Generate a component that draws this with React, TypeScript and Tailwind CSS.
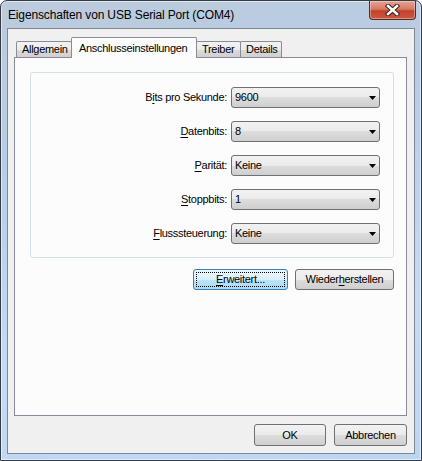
import React from 'react';

const font = "font-['Liberation_Sans',Arial,sans-serif]";

const Key: React.FC<{ children: React.ReactNode }> = ({ children }) => (
  <span className="underline underline-offset-[2px] decoration-[1px]">{children}</span>
);

const Combo: React.FC<{ value: string }> = ({ value }) => (
  <div className="flex h-[21px] items-center rounded-[3px] border border-[#707070] bg-[linear-gradient(#f2f2f2,#ebebeb_50%,#dddddd_50%,#cfcfcf)] pl-[3px] pr-[3px] text-black">
    <span className="leading-none">{value}</span>
    <svg width="7" height="4" viewBox="0 0 7 4" className="ml-auto">
      <polygon points="0,0 7,0 3.5,4" fill="#000" />
    </svg>
  </div>
);

const Button: React.FC<{ children: React.ReactNode; w: string; h: string; focused?: boolean }> = ({
  children,
  w,
  h,
  focused,
}) => (
  <div
    className={
      focused
        ? `relative flex ${w} ${h} items-center justify-center rounded-[3px] border border-[#3c7fb1] bg-[linear-gradient(#eaf6fd,#d9f0fc_50%,#bee6fd_50%,#a7d9f5)] text-black`
        : `relative flex ${w} ${h} items-center justify-center rounded-[3px] border border-[#707070] bg-[linear-gradient(#f2f2f2,#ebebeb_50%,#dddddd_50%,#cfcfcf)] text-black`
    }
  >
    {focused && <div className="absolute inset-[2px] border border-dotted border-black" />}
    <span className="leading-none">{children}</span>
  </div>
);

const Tab: React.FC<{ label: string; w: string; first?: boolean }> = ({ label, w, first }) => (
  <div
    className={`${first ? '' : '-ml-[1px]'} flex h-[16px] ${w} items-center rounded-t-[2px] border border-b-0 border-[#898c95] bg-[linear-gradient(#f2f2f2,#ebebeb_50%,#dddddd_50%,#cfcfcf)] pl-[5px] leading-none text-black`}
  >
    {label}
  </div>
);

const rows: { label: React.ReactNode; value: string }[] = [
  { label: <>B<Key>i</Key>ts pro Sekunde:</>, value: '9600' },
  { label: <><Key>D</Key>atenbits:</>, value: '8' },
  { label: <><Key>P</Key>arität:</>, value: 'Keine' },
  { label: <><Key>S</Key>toppbits:</>, value: '1' },
  { label: <><Key>F</Key>lusssteuerung:</>, value: 'Keine' },
];

export default function App() {
  return (
    <div
      className={`${font} flex h-[461px] w-[422px] flex-col rounded-t-[7px] border border-[#343c47] bg-[linear-gradient(170deg,#bccbdc,#b7cde6_30%,#c4dbf3_70%,#bcd6f2)] px-[6px] pb-[6px] text-[11px] tracking-[-0.3px] shadow-[inset_0_0_0_1px_rgba(255,255,255,0.55)]`}
    >
      {/* title bar */}
      <div className="flex h-[27px] items-start justify-between">
        <div className="pl-[1px] pt-[7px] text-[12px] leading-[15px] tracking-[-0.15px] text-black">
          Eigenschaften von USB Serial Port (COM4)
        </div>
        <div className="mr-[-1px] flex h-[19px] w-[47px] items-center justify-center rounded-b-[4px] border border-t-0 border-[#5b2a22] bg-[linear-gradient(#e6a394,#d67a63_45%,#c2412a_55%,#cc5a40)] shadow-[inset_0_0_0_1px_rgba(255,255,255,0.35)]">
          <svg width="15" height="12" viewBox="0 0 15 12">
            <path d="M3 2 L12 10 M12 2 L3 10" stroke="#3a2420" strokeWidth="4.5" strokeLinecap="square" />
            <path d="M3 2 L12 10 M12 2 L3 10" stroke="#ffffff" strokeWidth="2.5" strokeLinecap="square" />
          </svg>
        </div>
      </div>

      {/* client area */}
      <div className="flex flex-1 flex-col border border-[#7c8996] bg-[#f0f0f0] pb-[7px]">
        {/* tabs */}
        <div className="relative z-10 flex h-[28px] items-end pl-[8px]">
          <Tab label="Allgemein" w="w-[56px]" first />
          <div className="-mb-[1px] -ml-[1px] flex h-[21px] w-[126px] items-start rounded-t-[2px] border border-b-0 border-[#898c95] bg-[#fcfcfc] pl-[7px] pt-[5px] leading-none text-black">
            Anschlusseinstellungen
          </div>
          <Tab label="Treiber" w="w-[45px]" />
          <Tab label="Details" w="w-[42px]" />
        </div>

        {/* panel */}
        <div className="ml-[6px] flex h-[359px] w-[393px] flex-col border border-[#898c95] bg-[#fcfcfc]">
          <div className="ml-[15px] mt-[14px] w-[364px] rounded-[3px] border border-[#d5dfe5] pb-[13px] pr-[13px] pt-[14px]">
            <div className="grid grid-cols-[1fr_149px] gap-x-[4px] gap-y-[13px]">
              {rows.map((r, i) => (
                <React.Fragment key={i}>
                  <div className="flex items-center justify-end text-black">{r.label}</div>
                  <Combo value={r.value} />
                </React.Fragment>
              ))}
            </div>
          </div>
          <div className="ml-[15px] mt-[11px] flex w-[364px] justify-end gap-[7px]">
            <Button w="w-[95px]" h="h-[21px]" focused>
              <Key>E</Key>rweitert...
            </Button>
            <Button w="w-[99px]" h="h-[21px]">
              Wieder<Key>h</Key>erstellen
            </Button>
          </div>
        </div>

        {/* dialog buttons */}
        <div className="mt-[8px] flex justify-end gap-[8px] pr-[7px]">
          <Button w="w-[72px]" h="h-[22px]">OK</Button>
          <Button w="w-[73px]" h="h-[22px]">Abbrechen</Button>
        </div>
      </div>
    </div>
  );
}
